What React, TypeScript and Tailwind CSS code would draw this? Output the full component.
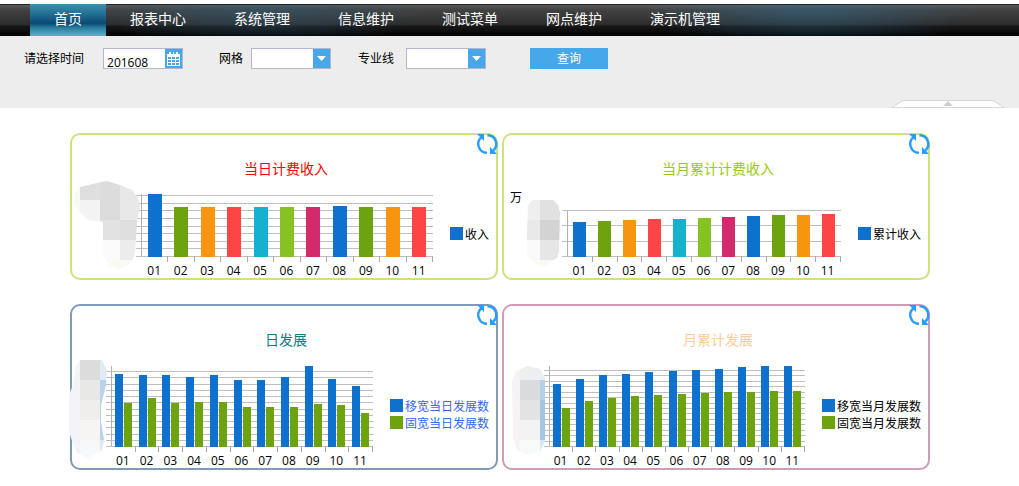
type Cell = [x: number, y: number, w: number, h: number, fill: string];

type Series = {
  label: string;
  color: string;
  heights: number[];
};

type ChartCardProps = {
  id: string;
  title: string;
  titleClass: string;
  borderClass: string;
  legendClass?: string;
  unit?: string;
  width: number;
  height: number;
  axisX: number;
  axisTop: number;
  right: number;
  base: number;
  gridHeight: number;
  gridCount: number;
  barWidth: number;
  barColors?: string[];
  series: Series[];
  maskOutline: string;
  maskCells: Cell[];
};

const BLUE = '#0e71cd';
const GREEN = '#6ea310';

const MENUS = ['首页', '报表中心', '系统管理', '信息维护', '测试菜单', '网点维护', '演示机管理'];

const LABELS = ['01', '02', '03', '04', '05', '06', '07', '08', '09', '10', '11'];

const PALETTE = [
  BLUE, GREEN, '#f79410', '#fd4545', '#17b1d0', '#86c222', '#d32a6c',
  BLUE, GREEN, '#f79410', '#fd4545',
];

const CHARTS: ChartCardProps[] = [
  {
    id: 'day-income',
    title: '当日计费收入',
    titleClass: 'text-[#ff0000]',
    borderClass: 'border-[#cbe37a]',
    width: 378,
    height: 99,
    axisX: 69,
    axisTop: 15,
    right: 360,
    base: 77,
    gridHeight: 61,
    gridCount: 8,
    barWidth: 14,
    barColors: PALETTE,
    series: [{ label: '收入', color: BLUE, heights: [63, 50, 50, 50, 50, 50, 50, 51, 50, 50, 50] }],
    maskOutline: '3,13 8,8 25,4 35,2 48,6 60,11 66,19 68,28 65,43 63,73 60,83 48,90 38,86 31,76 31,43 16,41 8,33 2,23',
    maskCells: [
      [2, 2, 6, 40, '#f7fbf2'],
      [8, 2, 20, 19, '#dfdfdf'],
      [28, 2, 20, 39, '#dcdcdc'],
      [48, 2, 20, 39, '#e8e8e8'],
      [8, 21, 20, 22, '#f3f3f3'],
      [28, 41, 20, 20, '#e2e2e2'],
      [48, 41, 20, 20, '#dedede'],
      [28, 61, 20, 20, '#fbfbfb'],
      [48, 61, 20, 20, '#ececec'],
      [28, 81, 40, 10, '#f7fbf2'],
    ],
  },
  {
    id: 'month-income',
    title: '当月累计计费收入',
    titleClass: 'text-[#99cc00]',
    borderClass: 'border-[#cbe37a]',
    unit: '万',
    width: 354,
    height: 99,
    axisX: 63,
    axisTop: 31,
    right: 336,
    base: 77,
    gridHeight: 46,
    gridCount: 3,
    barWidth: 13,
    barColors: PALETTE,
    series: [{ label: '累计收入', color: BLUE, heights: [35, 36, 37, 38, 38, 39, 40, 41, 42, 42, 43] }],
    maskOutline: '29,21 49,21 54,26 56,33 55,73 53,79 39,88 29,83 23,76 23,53 24,26',
    maskCells: [
      [23, 21, 13, 20, '#efefef'],
      [36, 21, 20, 20, '#e1e1e1'],
      [23, 41, 13, 20, '#e9e9e9'],
      [36, 41, 20, 20, '#d3d3d3'],
      [23, 61, 13, 20, '#fafafa'],
      [36, 61, 20, 20, '#e6e6e6'],
      [23, 81, 33, 8, '#f7fbf2'],
    ],
  },
  {
    id: 'day-growth',
    title: '日发展',
    titleClass: 'text-[#008080]',
    borderClass: 'border-[#7f9bb8]',
    legendClass: 'text-[#3366ff]',
    width: 318,
    height: 118,
    axisX: 39,
    axisTop: 16,
    right: 300,
    base: 96,
    gridHeight: 75,
    gridCount: 12,
    barWidth: 8,
    series: [
      { label: '移宽当日发展数', color: BLUE, heights: [73, 72, 72, 70, 72, 67, 67, 70, 81, 68, 61] },
      { label: '固宽当日发展数', color: GREEN, heights: [44, 49, 44, 45, 45, 40, 40, 40, 43, 42, 34] },
    ],
    maskOutline: '8,10 30,10 35,20 34,35 29,55 29,71 32,90 30,100 16,108 5,103 0,91 -3,81 -3,45 1,35 3,18',
    maskCells: [
      [-3, 10, 11, 98, '#f2f4f8'],
      [8, 10, 20, 20, '#dcdcdc'],
      [28, 10, 8, 20, '#e1ebf3'],
      [8, 30, 20, 20, '#e8e9e7'],
      [28, 30, 8, 60, '#b8d3eb'],
      [8, 50, 20, 20, '#efeeec'],
      [8, 70, 20, 20, '#f6f5f4'],
      [8, 90, 20, 18, '#f7f8f9'],
      [28, 90, 8, 15, '#dce9f4'],
    ],
  },
  {
    id: 'month-growth',
    title: '月累计发展',
    titleClass: 'text-[#ffcc99]',
    borderClass: 'border-[#cf9bb5]',
    width: 318,
    height: 118,
    axisX: 45,
    axisTop: 16,
    right: 300,
    base: 96,
    gridHeight: 76,
    gridCount: 14,
    barWidth: 8,
    series: [
      { label: '移宽当月发展数', color: BLUE, heights: [63, 68, 72, 73, 75, 76, 77, 78, 80, 81, 81] },
      { label: '固宽当月发展数', color: GREEN, heights: [39, 46, 49, 51, 52, 53, 54, 55, 55, 56, 56] },
    ],
    maskOutline: '24,16 36,19 41,28 41,91 36,101 25,105 14,101 9,88 8,31 12,21',
    maskCells: [
      [8, 16, 8, 89, '#f6f2f5'],
      [16, 16, 25, 14, '#eceef0'],
      [16, 30, 20, 20, '#d9dbdd'],
      [36, 30, 5, 20, '#b5d0ea'],
      [16, 50, 20, 20, '#e3e3e3'],
      [36, 50, 5, 40, '#a3c6e3'],
      [16, 70, 20, 20, '#f3f3f3'],
      [16, 90, 20, 15, '#f8faf9'],
      [36, 90, 5, 15, '#d8e6f2'],
    ],
  },
];

const CalendarIcon = () => (
  <svg viewBox="0 0 13 14" className="w-[13px] h-[14px]" shapeRendering="crispEdges" fill="#fff">
    <path d="M2 0h2v2H2z M6 0h1v2H6z M9 0h2v2H9z" />
    <path fillRule="evenodd" d="M0 2h13v12H0z M1 5v2h3V5z M5 5v2h3V5z M9 5v2h3V5z M1 8v2h3V8z M5 8v2h3V8z M9 8v2h3V8z M1 11v2h3v-2z M5 11v2h3v-2z M9 11v2h3v-2z" />
  </svg>
);

const RefreshIcon = () => (
  <svg viewBox="0 0 21 20" className="w-[21px] h-5" fill="none">
    <path d="M5 2.900A8.700 8.700 0 0 0 10 18.700" stroke="#2a9dfb" strokeWidth="2.4" />
    <path d="M10.500 1.300A8.700 8.700 0 0 1 16.200 16.600" stroke="#2a9dfb" strokeWidth="2.4" />
    <path d="M0 0h7v7z" fill="#2a9dfb" />
    <path d="M13 13v7h7z" fill="#2a9dfb" />
  </svg>
);

const BarChart = (props: ChartCardProps) => {
  const { width, height, axisX, axisTop, right, base, gridHeight, gridCount, barWidth, series } = props;
  const step = (right - axisX) / LABELS.length;
  const groupWidth = series.length * barWidth + (series.length - 1);
  const gridLines = Array.from({ length: gridCount + 1 }, (_, i) => Math.round(base - (i * gridHeight) / gridCount));

  return (
    <svg viewBox={`0 0 ${width} ${height}`} className="block w-full overflow-visible" role="img" aria-label={props.title}>
      <g shapeRendering="crispEdges">
        {gridLines.map((y) => (
          <rect key={y} x={axisX - 5} y={y} width={right - axisX + 6} height={1} fill="#bfbfbf" />
        ))}
        <rect x={axisX} y={axisTop} width={1} height={base - axisTop} fill="#b0b0b0" />
        {/* 分类刻度 */}
        {LABELS.map((label, i) => (
          <rect key={label} x={Math.round(axisX + (i + 1) * step)} y={base} width={1} height={6} fill="#a8a8a8" />
        ))}
        {series.map((s, n) =>
          s.heights.map((h, i) => (
            <rect
              key={`${s.label}-${i}`}
              x={Math.round(axisX + 0.5 + (i + 0.5) * step - groupWidth / 2) + n * (barWidth + 1)}
              y={base + 1 - h}
              width={barWidth}
              height={h}
              fill={props.barColors ? props.barColors[i] : s.color}
            />
          ))
        )}
      </g>

      {LABELS.map((label, i) => (
        <text key={label} x={axisX + (i + 0.5) * step} y={base + 19} textAnchor="middle" fontSize="12" fill="#000">
          {label}
        </text>
      ))}
      {props.unit && <text x="6" y="23" fontSize="12" fill="#000">{props.unit}</text>}

      {/* 数值轴遮罩 */}
      <clipPath id={props.id}>
        <polygon points={props.maskOutline} />
      </clipPath>
      <g clipPath={`url(#${props.id})`} shapeRendering="crispEdges">
        {props.maskCells.map(([x, y, w, h, fill]) => (
          <rect key={`${x}-${y}`} x={x} y={y} width={w} height={h} fill={fill} />
        ))}
      </g>
    </svg>
  );
};

const ChartCard = (props: ChartCardProps) => {
  return (
    <section className={`relative border-2 rounded-[10px] ${props.borderClass}`}>
      <button type="button" aria-label="刷新" className="absolute -top-px -right-[2px] cursor-pointer">
        <RefreshIcon />
      </button>
      <h2 className={`pt-6 pl-1 text-center text-sm leading-5 ${props.titleClass}`}>{props.title}</h2>
      <div className="flex pr-[7px]">
        <div className="flex-1 min-w-0">
          <BarChart {...props} />
        </div>
        <ul className={`self-center pt-[10px] text-xs ${props.legendClass ?? 'text-black'}`}>
          {props.series.map((s) => (
            <li key={s.label} className="flex items-center gap-[2px] h-[17px] whitespace-nowrap">
              <span className="w-[13px] h-[13px]" style={{ backgroundColor: s.color }} />
              <span className="pt-1">{s.label}</span>
            </li>
          ))}
        </ul>
      </div>
    </section>
  );
};

const SelectBox = ({ id }: { id: string }) => (
  <div className="relative w-20 h-[21px]">
    <select id={id} className="w-full h-full appearance-none bg-white border border-[#b5b5cc] pl-1 pr-5 text-xs">
      <option value=""></option>
    </select>
    <span className="absolute top-px right-px w-[17px] h-[19px] bg-[#46a7ea] flex items-center justify-center pointer-events-none">
      <svg viewBox="0 0 9 5" className="w-[9px] h-[5px]">
        <path d="M0 0h9L4.500 5z" fill="#fff" />
      </svg>
    </span>
  </div>
);

export default function App() {
  return (
    <div className="min-h-screen bg-white pt-1 font-['Open_Sans','Noto_Sans_CJK_SC',sans-serif]">
      <nav className="h-8 pl-[30px] flex border-t border-[#262626] bg-[radial-gradient(ellipse_170px_46px_at_260px_0px,#2f5f7888,transparent),radial-gradient(ellipse_170px_46px_at_810px_0px,#2f6c9088,transparent),linear-gradient(to_bottom,#5a5a5a,#434343_15%,#2c2c2c_62%,#181818_68%,#000)]">
        {MENUS.map((menu, i) => (
          <a
            key={menu}
            href="#"
            className={`-mt-px h-8 px-6 text-sm leading-[30px] text-white whitespace-nowrap ${
              i === 0 ? 'bg-[linear-gradient(to_bottom,#3f8fae,#1f6a90_35%,#0a4a75_60%,#2a7f9f_75%,#5cb2c8)]' : ''
            }`}
          >
            {menu}
          </a>
        ))}
      </nav>

      <form className="bg-[#ededed] pt-3 flex flex-col text-xs" onSubmit={(e) => e.preventDefault()}>
        <div className="flex items-center pl-6 h-[21px] text-black">
          <label htmlFor="month" className="mr-[19px]">请选择时间</label>
          <div className="flex w-20 h-[21px] mr-9 bg-white border border-[#b5b5cc]">
            <input id="month" type="text" defaultValue="201608" className="flex-1 min-w-0 h-full pl-[3px] pt-2 outline-none" />
            <button type="button" aria-label="选择月份" className="w-[17px] bg-[#46a7ea] flex items-center justify-center">
              <CalendarIcon />
            </button>
          </div>
          <label htmlFor="grid" className="mr-2">网格</label>
          <SelectBox id="grid" />
          <label htmlFor="line" className="ml-[27px] mr-3">专业线</label>
          <SelectBox id="line" />
          <button type="submit" className="ml-11 w-[78px] h-[21px] bg-[#46a7ea] text-white">查询</button>
        </div>
        <button type="button" aria-label="收起" className="self-end mt-[31px] mr-[14px]">
          <svg viewBox="0 0 114 8" className="block w-[114px] h-2">
            <path d="M0.500 7.500L12 0.500H102L113.500 7.500z" fill="#fff" stroke="#d6d6d6" />
            <path d="M57 1l5 5H52z" fill="#cfcfcf" />
          </svg>
        </button>
      </form>

      <main className="grid grid-cols-2 gap-x-1 gap-y-6 pt-[25px] pl-[70px] pr-[89px]">
        {CHARTS.map((chart) => (
          <ChartCard key={chart.id} {...chart} />
        ))}
      </main>
    </div>
  );
}
